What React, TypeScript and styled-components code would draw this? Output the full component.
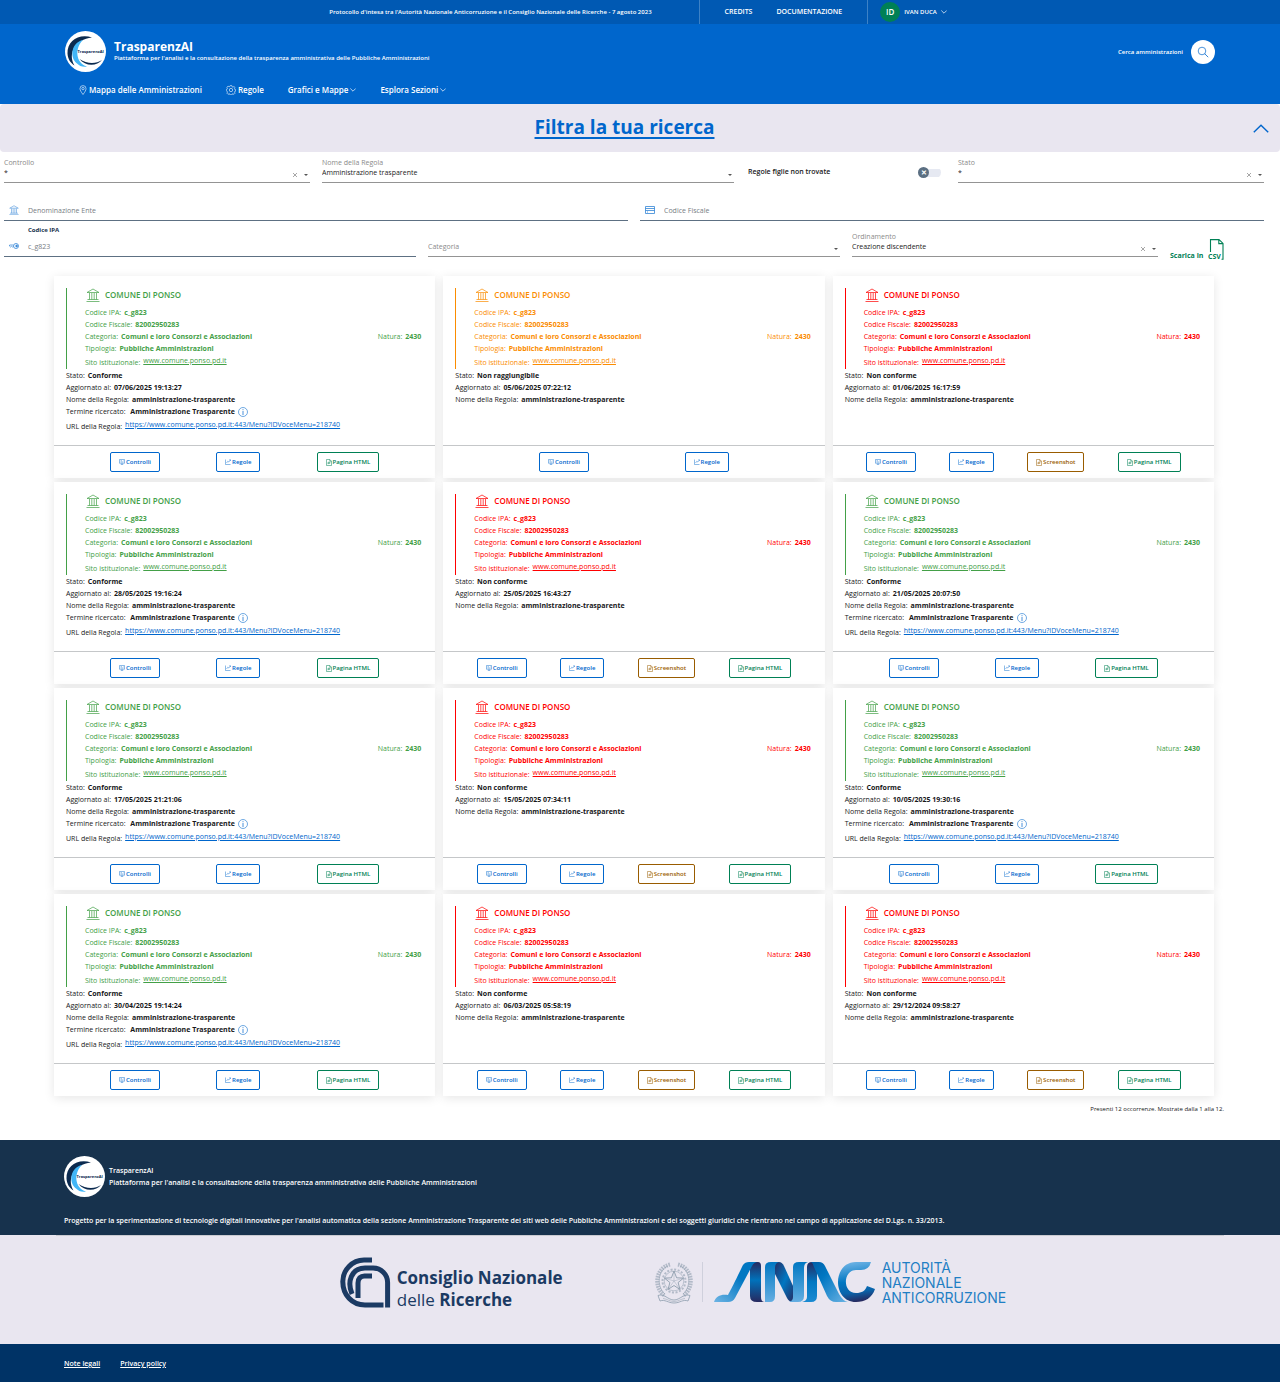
import React from "react";
import styled, { createGlobalStyle } from "styled-components";

const GlobalStyle = createGlobalStyle`
  *, *::before, *::after { box-sizing: border-box; }
  body {
    margin: 0;
    background: #fff;
    color: #17181a;
    font-family: "Open Sans", "Noto Sans", sans-serif;
    font-size: 7px;
    line-height: 12px;
  }
  h1, h2, h3, p, dl, dd, ul { margin: 0; padding: 0; font-size: inherit; font-weight: inherit; }
  a { color: inherit; text-decoration: none; }
  button, input, select { font: inherit; color: inherit; margin: 0; }
  svg { display: block; flex: none; }
`;

/* ---------- palette ---------- */

const tones = {
  ok: "#43a047",
  warn: "#fb8c00",
  ko: "#ff0000",
  primary: "#0066cc",
  success: "#008055",
  brown: "#995c00",
};
type Tone = keyof typeof tones;

/* ---------- icons ---------- */

type IconProps = { size?: number };

const Stroke = styled.svg.attrs({ fill: "none", stroke: "currentColor", "aria-hidden": true })`
  stroke-linecap: butt;
`;

const BankIcon = ({ size = 14 }: IconProps) => (
  <Stroke width={size} height={size} viewBox="0 0 14 14">
    <path d="M1 4.5 L7 1 L13 4.5 M1 4.5H13 M3.5 5V11.5 M5.8 5V11.5 M8.2 5V11.5 M10.5 5V11.5 M1.5 11.5H12.5 M.5 13.5H13.5" strokeWidth="0.7" />
  </Stroke>
);
const CardIcon = () => (
  <Stroke width={10} height={8} viewBox="0 0 10 8">
    <path d="M.5 .5H9.5V7.5H.5Z M.5 2.5H9.5 M.5 4.5H9.5 M2 6H3" strokeWidth="0.8" />
  </Stroke>
);
const KeyIcon = () => (
  <Stroke width={10} height={6} viewBox="0 0 10 6">
    <circle cx="7" cy="3" r="2.5" strokeWidth="0.8" />
    <circle cx="7.6" cy="3" r="1" fill="currentColor" strokeWidth="0.5" />
    <path d="M4.4 2H.6L.4 3L1.5 4L2.4 3.3L3.3 4L4.4 3.6" strokeWidth="0.7" />
  </Stroke>
);
const PinIcon = () => (
  <Stroke width={8} height={10} viewBox="0 0 8 10">
    <path d="M4 9.500C2 6.800 1 5.200 1 3.600A3 3 0 0 1 7 3.600C7 5.200 6 6.800 4 9.500Z" strokeWidth="0.6" />
    <circle cx="4" cy="3.600" r="1.200" strokeWidth="0.6" />
  </Stroke>
);
const GearIcon = () => (
  <Stroke width={10} height={10} viewBox="0 0 24 24">
    <path d="M10 1.500h4l.6 2.800 2 .9 2.500-1.600 2.800 2.800-1.600 2.500.9 2 2.300.6v3l-2.300.6-.9 2 1.600 2.500-2.800 2.800-2.500-1.600-2 .9-.6 2.300h-4l-.6-2.300-2-.9-2.500 1.600-2.800-2.800 1.600-2.500-.9-2L.5 13.500v-3l2.300-.6.9-2-1.600-2.500 2.800-2.800 2.500 1.600 2-.9Z" strokeWidth="1.400" />
    <circle cx="12" cy="12" r="4" strokeWidth="1.400" />
  </Stroke>
);
const ChevronDown = () => (
  <Stroke width={6} height={4} viewBox="0 0 6 4">
    <path d="M.3 .5L3 3.2L5.7 .5" strokeWidth="0.7" />
  </Stroke>
);
const ChevronUp = () => (
  <Stroke width={16} height={9} viewBox="0 0 16 9">
    <path d="M.8 8.2L8 1.2L15.2 8.2" strokeWidth="1.4" />
  </Stroke>
);
const SearchIcon = () => (
  <Stroke width={12} height={12} viewBox="0 0 12 12">
    <circle cx="5" cy="5" r="3.8" strokeWidth="0.7" />
    <path d="M7.700 7.700L11.200 11.200" strokeWidth="0.8" />
  </Stroke>
);
const InfoIcon = () => (
  <Stroke width={10} height={10} viewBox="0 0 10 10">
    <circle cx="5" cy="5" r="4.500" strokeWidth="0.7" />
    <path d="M5 4V8 M5 2.200V3.200" strokeWidth="0.9" />
  </Stroke>
);
const ClearIcon = () => (
  <Stroke width={6} height={6} viewBox="0 0 6 6">
    <path d="M1 1L5 5M5 1L1 5" strokeWidth="0.6" />
  </Stroke>
);
const CaretIcon = () => (
  <svg width={4} height={2} viewBox="0 0 4 2" aria-hidden="true">
    <path d="M0 0H4L2 2Z" fill="#555" />
  </svg>
);
const ControlsIcon = () => (
  <Stroke width={6} height={6} viewBox="0 0 12 12">
    <path d="M1 1H11V8.500H1Z M3.500 11.200H8.500 M6 8.500V11 M3 3.500H6 M3 6H9 M8 3.500H9" strokeWidth=".9" />
  </Stroke>
);
const RulesIcon = () => (
  <Stroke width={6} height={6} viewBox="0 0 12 12">
    <path d="M1 1V11H11 M3 8L5.500 4.500L7.500 6L11 1.800 M8.500 1.500H11.200V4" strokeWidth=".9" />
  </Stroke>
);
const FileIcon = () => (
  <Stroke width={6} height={7} viewBox="0 0 12 14">
    <path d="M1 1H7.500L11 4.500V13H1Z M7.500 1V4.500H11 M4 10.500V6.500H8V8.700H4" strokeWidth="1" />
  </Stroke>
);
const CsvIcon = () => (
  <svg width={16} height={21} viewBox="0 0 16 21" aria-hidden="true">
    <path d="M2.500 13V.6H11L15 4.400V20.300H13.500 M10.800 .6V4.600H15" fill="none" stroke="currentColor" strokeWidth="1.100" />
    <text x="0" y="20.300" fontSize="7" fontWeight="700" fill="currentColor">CSV</text>
  </svg>
);

/* ---------- logos ---------- */

const BrandLogo = () => (
  <svg width={41} height={41} viewBox="0 0 41 41" aria-hidden="true">
    <circle cx="20.500" cy="20.500" r="20.500" fill="#fff" />
    <path d="M27 6.500C14 2 2 10 2.500 22.500C2.800 28 5.500 32 9.500 34.500C2.500 23 10 8 27 6.500Z" fill="#0b2a4f" />
    <path d="M18 9C6.500 11.500 4 26 12 32.500C14.500 35 18 36.500 22 35.500C10.500 32 9.500 17 18 9Z" fill="#41b6f7" />
    <path d="M14.500 28C20 35.500 32 35.500 37 29C31 33 22 33 14.500 28Z" fill="#0b2a4f" />
    <text x="12.500" y="22" fontSize="4" fontWeight="700" fill="#0b2a4f">TrasparenzAI</text>
  </svg>
);

const CnrMark = () => (
  <svg width={51} height={51} viewBox="0 0 51 51" fill="none" stroke="#1b3a63" strokeWidth="5" aria-hidden="true">
    <path d="M32 3H24A21.500 21.500 0 0 0 2.800 24.500C2.800 38 12 48 25 48H43.500" />
    <path d="M12 37C7 25 11 11 25 11H33A14.500 14.500 0 0 1 47.600 25.500V50.500" />
    <path d="M18 41V26C18 21.500 20.500 19 24.500 19H32" />
  </svg>
);

const Emblem = () => (
  <svg width={38} height={42} viewBox="0 0 38 42" fill="none" stroke="#8d9dad" aria-hidden="true">
    <path d="M15 2.500C0 6 -2 26 10 34M23 2.500C38 6 40 26 28 34" strokeWidth="4" strokeDasharray="1.600 .9" opacity=".6" />
    <path d="M13 4C3 8 1 24 10 32M25 4C35 8 37 24 28 32" strokeWidth=".6" />
    <circle cx="19" cy="19" r="11.500" strokeWidth="2" strokeDasharray="2 1.600" opacity=".6" />
    <circle cx="19" cy="19" r="9.800" strokeWidth=".5" />
    <path d="M19 9L21.600 15.800L28.600 16.100L23.100 20.500L25 27.500L19 23.500L13 27.500L14.900 20.500L9.400 16.100L16.400 15.800Z" fill="#e9e6f0" strokeWidth=".9" />
    <path d="M19 9V19L28.600 16.100M19 19L25 27.500M19 19L13 27.500M19 19L9.400 16.100" strokeWidth=".4" />
    <path d="M3 33.500C9 31 13 38 19 38C25 38 29 31 35 33.500L33 39C28 37 25 41 19 41C13 41 10 37 5 39Z" strokeWidth=".8" />
    <path d="M8 36.500C13 37 14 39.500 19 39.500C24 39.500 25 37 30 36.500" strokeWidth=".5" />
  </svg>
);

const AnacMark = () => (
  <svg width={162} height={40} viewBox="0 0 162 40" aria-hidden="true">
    <defs>
      <linearGradient id="sweep" x1="0" y1="1" x2="1" y2="0">
        <stop offset="0" stopColor="#6db4e4" />
        <stop offset=".6" stopColor="#0077c2" />
        <stop offset="1" stopColor="#0077c2" />
      </linearGradient>
      <linearGradient id="fold" x1="0" y1="0" x2="0" y2="1">
        <stop offset="0" stopColor="#27295f" />
        <stop offset=".45" stopColor="#0072bb" />
        <stop offset="1" stopColor="#27295f" />
      </linearGradient>
      <linearGradient id="bright" x1="0" y1="0" x2="0" y2="1">
        <stop offset="0" stopColor="#27295f" />
        <stop offset=".5" stopColor="#0077c2" />
        <stop offset="1" stopColor="#1a8ad2" />
      </linearGradient>
      <linearGradient id="fade" x1="0" y1="0" x2="0" y2="1">
        <stop offset="0" stopColor="#0077c2" />
        <stop offset="1" stopColor="#64aee2" />
      </linearGradient>
      <linearGradient id="deep" x1="0" y1="0" x2="1" y2="1">
        <stop offset="0" stopColor="#27295f" />
        <stop offset=".5" stopColor="#0077c2" />
        <stop offset="1" stopColor="#27295f" />
      </linearGradient>
      <linearGradient id="slope" x1="0" y1="0" x2="1" y2="1">
        <stop offset="0" stopColor="#005fa8" />
        <stop offset=".35" stopColor="#0077c2" />
        <stop offset="1" stopColor="#6db4e4" />
      </linearGradient>
      <linearGradient id="bow" gradientUnits="userSpaceOnUse" x1="148" y1="0" x2="154" y2="38">
        <stop offset="0" stopColor="#64aee2" />
        <stop offset=".45" stopColor="#0077c2" />
        <stop offset=".75" stopColor="#0a63aa" />
        <stop offset="1" stopColor="#27295f" />
      </linearGradient>
    </defs>
    <path d="M36 0H44Q47 0 47 4V35Q47 40 51 40H43Q36 40 36 34Z" fill="url(#fold)" />
    <path d="M0 40C2 34 7 32 14 33C16 30 28 5 29 3Q31 0 35 0H44Q40 0 38 4L21 36Q19 40 14 40Z" fill="url(#sweep)" />
    <path d="M60 0H65Q68 0 70 4L80 26V40H79Q75 40 73 36L60 10Z" fill="url(#deep)" />
    <path d="M51 40V5Q51 0 57 0H65Q61 1 61 6V34Q61 40 56 40Z" fill="url(#fade)" />
    <path d="M79 5Q79 0 85 0H94Q90 1 90 6V34Q90 40 84 40H75Q79 39 79 35Z" fill="url(#fade)" />
    <path d="M93 5Q93 0 98 0H103V34Q103 40 97 40H88Q93 39 93 35Z" fill="url(#bright)" />
    <path d="M97 0H105Q109 0 111 4L125 32Q129 39 134 40H122Q116 40 113 34L100 5Q99 1 97 0Z" fill="url(#slope)" />
    <path d="M157 0Q155 8 147 8H142C129 8 128 31 142 31C148 31 151 29 153 24L161 27C158 36 151 40 142 40C118 40 118 0 142 0Z" fill="url(#bow)" />
  </svg>
);

/* ---------- header ---------- */

const SlimBar = styled.div`
  display: flex;
  justify-content: center;
  height: 24px;
  padding-right: 4px;
  background: #0059b3;
  color: #fff;
  font-weight: 600;
`;
const Notice = styled.p`
  padding-right: 47px;
  font-size: 6px;
  line-height: 24px;
`;
const SlimNav = styled.nav`
  display: flex;
  align-items: center;
  gap: 24px;
  padding: 0 25px;
  border: solid #3d82c6;
  border-width: 0 1px;
  line-height: 24px;
`;
const UserButton = styled.button`
  display: flex;
  align-items: center;
  gap: 4px;
  padding: 0 0 0 12px;
  border: 0;
  background: none;
  font-size: 6px;
`;
const Avatar = styled.span`
  width: 20px;
  border-radius: 50%;
  background: #008055;
  font-size: 8px;
  line-height: 20px;
  text-align: center;
`;
const Header = styled.header`
  background: #0066cc;
  color: #fff;
`;
const Container = styled.div`
  width: 100%;
  max-width: 1176px;
  margin: 0 auto;
  padding: 0 12px;
`;
const BrandRow = styled(Container)`
  display: flex;
  align-items: center;
  justify-content: space-between;
  padding: 7px 13px 0;
`;
const Brand = styled.a`
  display: flex;
  align-items: center;
  gap: 8px;
`;
const BrandName = styled.span`
  display: block;
  padding-top: 1px;
  font-size: 12px;
  font-weight: 700;
  line-height: 12px;
`;
const Tagline = styled.span`
  display: block;
  font-size: 6px;
  font-weight: 600;
  line-height: 10px;
`;
const Search = styled.div`
  display: flex;
  align-items: center;
  gap: 8px;
  font-size: 6px;
  font-weight: 600;
`;
const RoundButton = styled.button`
  display: grid;
  place-items: center;
  width: 24px;
  height: 24px;
  padding: 0;
  border: 0;
  border-radius: 50%;
  background: #fff;
  color: #0066cc;
`;
const MainNav = styled(Container)`
  display: flex;
  align-items: center;
  gap: 24px;
  height: 32px;
  padding: 4px 27px 0;
  font-size: 8px;
  font-weight: 600;
`;
const NavLink = styled.a`
  display: flex;
  align-items: center;
  gap: 2px;
`;

/* ---------- filters ---------- */

const FilterHeading = styled.h2`
  border-radius: 4px;
  background: #e9e6f0;
`;
const FilterToggle = styled.button`
  display: flex;
  align-items: center;
  width: 100%;
  height: 48px;
  padding: 0 11px 0 0;
  border: 0;
  background: none;
  color: #0066cc;
`;
const FilterTitle = styled.span`
  flex: 1;
  padding: 0 4px 2px 0;
  font-size: 19px;
  font-weight: 700;
  line-height: 24px;
  text-align: center;
  text-decoration: underline;
  text-decoration-thickness: 2px;
  text-underline-offset: 3px;
`;
const Filters = styled.form`
  padding: 6px 16px 0 4px;
`;
const FilterRow = styled.div<{ $gap: number }>`
  display: grid;
  grid-template-columns: repeat(12, minmax(0, 1fr));
  column-gap: 12px;
  align-items: end;
  margin-bottom: ${(p) => p.$gap}px;
`;
const Field = styled.div<{ $span: number }>`
  grid-column: span ${(p) => p.$span};
`;
const FieldLabel = styled.label`
  display: block;
  color: #8a8a8a;
  line-height: 10px;
`;
const InsetLabel = styled(FieldLabel)`
  padding-left: 24px;
  color: #17324d;
  font-size: 6px;
  font-weight: 700;
  line-height: 12px;
`;
const SelectBox = styled.div`
  display: flex;
  align-items: center;
  gap: 6px;
  padding-right: 2px;
  border-bottom: 1px solid #949494;
  color: #6b6b6b;
`;
const Select = styled.select<{ $empty?: boolean }>`
  flex: 1;
  min-width: 0;
  height: 14px;
  padding: 0 0 4px;
  border: 0;
  outline: 0;
  background: none;
  appearance: none;
  color: ${(p) => (p.$empty ? "#8a8a8a" : "#222")};
  font-weight: ${(p) => (p.$empty ? 400 : 500)};
  line-height: 10px;
`;
const ClearButton = styled.button`
  padding: 0;
  border: 0;
  background: none;
`;
const InputBox = styled.div`
  display: flex;
  align-items: center;
  gap: 9px;
  height: 21px;
  padding-left: 5px;
  border-bottom: 1px solid #5d7083;
  color: #3385d6;
`;
const Input = styled.input`
  flex: 1;
  min-width: 0;
  height: 20px;
  padding: 0;
  border: 0;
  outline: 0;
  background: none;
  color: #777d84;
  &::placeholder { color: #777d84; opacity: 1; }
`;
const SwitchField = styled.label`
  grid-column: span 2;
  display: flex;
  align-items: center;
  justify-content: space-between;
  align-self: center;
  padding: 3px 5px 0 2px;
  font-weight: 600;
`;
const Switch = styled.input`
  appearance: none;
  display: flex;
  align-items: center;
  width: 23px;
  height: 11px;
  background: linear-gradient(#e6e9f2, #e6e9f2) 5px 2px / 18px 8px no-repeat;
  border-radius: 6px;
  &::before {
    content: "✕";
    width: 11px;
    border-radius: 50%;
    background: #5b6f82;
    color: #fff;
    font-size: 7px;
    line-height: 11px;
    text-align: center;
  }
`;
const CsvButton = styled.button`
  display: flex;
  align-items: flex-end;
  gap: 5px;
  height: 19px;
  margin-bottom: -3px;
  padding: 0;
  border: 0;
  background: none;
  color: #008055;
  font-weight: 700;
  line-height: 8px;
  white-space: nowrap;
`;

function SelectField(props: { id: string; label?: string; value: string; span: number; clearable?: boolean; empty?: boolean }) {
  return (
    <Field $span={props.span}>
      {props.label && <FieldLabel htmlFor={props.id}>{props.label}</FieldLabel>}
      <SelectBox>
        <Select id={props.id} aria-label={props.label ?? props.value} $empty={props.empty}>
          <option>{props.value}</option>
        </Select>
        {props.clearable && (
          <ClearButton type="button" aria-label="Cancella">
            <ClearIcon />
          </ClearButton>
        )}
        <CaretIcon />
      </SelectBox>
    </Field>
  );
}

/* ---------- cards ---------- */

const Results = styled.main`
  width: 100%;
  max-width: 1176px;
  margin: 0 auto;
  padding: 17px 4px 25px 2px;
`;
const CardGrid = styled.div`
  display: grid;
  grid-template-columns: repeat(3, minmax(0, 1fr));
  gap: 4px 8px;
  padding-right: 10px;
`;
const CardBox = styled.article`
  display: flex;
  flex-direction: column;
  background: #fff;
  box-shadow: 0 2px 10px rgba(0, 0, 0, 0.1);
`;
const CardBody = styled.div`
  flex: 1;
  padding: 12px;
`;
const Entity = styled.section<{ $tone: Tone }>`
  padding: 0 2px 0 18px;
  border-left: 1px solid ${(p) => tones[p.$tone]};
  color: ${(p) => tones[p.$tone]};
`;
const EntityTitle = styled.h3`
  display: flex;
  align-items: center;
  gap: 5px;
  height: 18px;
  padding: 0 0 4px 1px;
  font-size: 8px;
  font-weight: 600;
`;
const Line = styled.p<{ $height?: number }>`
  display: flex;
  gap: 3px;
  align-items: ${(p) => (p.$height === 15 ? "flex-end" : "center")};
  height: ${(p) => p.$height ?? 12}px;
  padding-top: 1px;
`;
const Spacer = styled.span`
  flex: 1;
`;
const RaisedLink = styled.a<{ $tone?: Tone }>`
  align-self: flex-start;
  color: ${(p) => (p.$tone ? tones[p.$tone] : "inherit")};
  text-decoration: underline;
  text-underline-offset: 1px;
`;
const InfoButton = styled.button`
  padding: 0;
  border: 0;
  background: none;
  color: #3385d6;
`;
const CardFooter = styled.footer`
  display: flex;
  align-items: center;
  justify-content: space-evenly;
  height: 33px;
  border-top: 1px solid #c5c7c9;
`;
const ActionButton = styled.button<{ $tone: Tone }>`
  display: flex;
  align-items: center;
  gap: 1px;
  height: 20px;
  padding: 0 8px;
  border: 1px solid ${(p) => tones[p.$tone]};
  border-radius: 2px;
  background: none;
  color: ${(p) => tones[p.$tone]};
  font-size: 6px;
  font-weight: 600;
`;
const Summary = styled.p`
  padding-top: 7px;
  font-size: 6px;
  text-align: right;
`;

type Status = "Conforme" | "Non raggiungibile" | "Non conforme";
const statusTone: Record<Status, Tone> = { Conforme: "ok", "Non raggiungibile": "warn", "Non conforme": "ko" };

const results: [Status, string][] = [
  ["Conforme", "07/06/2025 19:13:27"],
  ["Non raggiungibile", "05/06/2025 07:22:12"],
  ["Non conforme", "01/06/2025 16:17:59"],
  ["Conforme", "28/05/2025 19:16:24"],
  ["Non conforme", "25/05/2025 16:43:27"],
  ["Conforme", "21/05/2025 20:07:50"],
  ["Conforme", "17/05/2025 21:21:06"],
  ["Non conforme", "15/05/2025 07:34:11"],
  ["Conforme", "10/05/2025 19:30:16"],
  ["Conforme", "30/04/2025 19:14:24"],
  ["Non conforme", "06/03/2025 05:58:19"],
  ["Non conforme", "29/12/2024 09:58:27"],
];

function ResultCard({ status, date }: { status: Status; date: string }) {
  const found = status === "Conforme";
  return (
    <CardBox>
      <CardBody>
        <Entity $tone={statusTone[status]}>
          <EntityTitle><BankIcon />COMUNE DI PONSO</EntityTitle>
          <Line>Codice IPA: <b>c_g823</b></Line>
          <Line>Codice Fiscale: <b>82002950283</b></Line>
          <Line>Categoria: <b>Comuni e loro Consorzi e Associazioni</b><Spacer />Natura: <b>2430</b></Line>
          <Line>Tipologia: <b>Pubbliche Amministrazioni</b></Line>
          <Line $height={15}>Sito istituzionale: <RaisedLink href="#sito">www.comune.ponso.pd.it</RaisedLink></Line>
        </Entity>
        <Line>Stato: <b>{status}</b></Line>
        <Line>Aggiornato al: <b>{date}</b></Line>
        <Line>Nome della Regola: <b>amministrazione-trasparente</b></Line>
        {found && (
          <>
            <Line $height={13}>
              Termine ricercato:&nbsp; <b>Amministrazione Trasparente</b>
              <InfoButton type="button" aria-label="Informazioni"><InfoIcon /></InfoButton>
            </Line>
            <Line $height={15}>
              URL della Regola:
              <RaisedLink $tone="primary" href="#regola">https://www.comune.ponso.pd.it:443/Menu?IDVoceMenu=218740</RaisedLink>
            </Line>
          </>
        )}
      </CardBody>
      <CardFooter>
        <ActionButton type="button" $tone="primary"><ControlsIcon />Controlli</ActionButton>
        <ActionButton type="button" $tone="primary"><RulesIcon />Regole</ActionButton>
        {status === "Non conforme" && <ActionButton type="button" $tone="brown"><FileIcon />Screenshot</ActionButton>}
        {status !== "Non raggiungibile" && <ActionButton type="button" $tone="success"><FileIcon />Pagina HTML</ActionButton>}
      </CardFooter>
    </CardBox>
  );
}

/* ---------- footer ---------- */

const FooterTop = styled.div`
  padding: 16px 0 8px;
  background: #17324d;
  color: #fff;
  font-weight: 600;
`;
const FooterBrand = styled.div`
  display: flex;
  align-items: center;
  gap: 4px;
  margin-bottom: 18px;
`;
const LogoBand = styled.div`
  background: #e9e6f0;
`;
const LogoRow = styled.div`
  display: flex;
  justify-content: center;
  gap: 92px;
  max-width: 1168px;
  height: 109px;
  margin: 0 auto;
  padding: 21px 0 0 66px;
  border-top: 1px solid #c9cad0;
`;
const CnrLogo = styled.div`
  display: flex;
  gap: 6px;
  align-self: flex-start;
`;
const CnrText = styled.p`
  padding-top: 10px;
  color: #1b3a63;
  font-size: 17px;
  line-height: 22px;
  white-space: nowrap;
`;
const AnacLogo = styled.div`
  display: flex;
  align-items: flex-start;
  padding-top: 5px;
`;
const Divider = styled.span`
  width: 1px;
  height: 40px;
  margin: 0 11px 0 9px;
  background: #cfd0dc;
`;
const AnacText = styled.p`
  margin-top: -2px;
  padding-left: 6px;
  color: #1f7fc4;
  font-family: Inter, sans-serif;
  font-size: 14px;
  line-height: 15px;
  white-space: nowrap;
`;
const LegalBar = styled.div`
  padding: 14px 0 12px;
  background: #003366;
  color: #fff;
  font-weight: 600;
`;
const LegalLinks = styled(Container)`
  display: flex;
  gap: 20px;
  & a { text-decoration: underline; text-underline-offset: 1px; }
`;

export default function App() {
  return (
    <>
      <GlobalStyle />
      <Header>
        <SlimBar>
          <Notice>Protocollo d'intesa tra l'Autorità Nazionale Anticorruzione e il Consiglio Nazionale delle Ricerche - 7 agosto 2023</Notice>
          <SlimNav>
            <a href="#credits">CREDITS</a>
            <a href="#documentazione">DOCUMENTAZIONE</a>
          </SlimNav>
          <UserButton type="button"><Avatar>ID</Avatar>IVAN DUCA<ChevronDown /></UserButton>
        </SlimBar>
        <BrandRow>
          <Brand href="#home">
            <BrandLogo />
            <span>
              <BrandName>TrasparenzAI</BrandName>
              <Tagline>Piattaforma per l'analisi e la consultazione della trasparenza amministrativa delle Pubbliche Amministrazioni</Tagline>
            </span>
          </Brand>
          <Search>
            Cerca amministrazioni
            <RoundButton type="button" aria-label="Cerca"><SearchIcon /></RoundButton>
          </Search>
        </BrandRow>
        <MainNav as="nav">
          <NavLink href="#mappa"><PinIcon />Mappa delle Amministrazioni</NavLink>
          <NavLink href="#regole"><GearIcon />Regole</NavLink>
          <NavLink href="#grafici">Grafici e Mappe<ChevronDown /></NavLink>
          <NavLink href="#sezioni">Esplora Sezioni<ChevronDown /></NavLink>
        </MainNav>
      </Header>

      <FilterHeading>
        <FilterToggle type="button">
          <FilterTitle>Filtra la tua ricerca</FilterTitle>
          <ChevronUp />
        </FilterToggle>
      </FilterHeading>
      <Filters>
        <FilterRow $gap={17}>
          <SelectField id="controllo" label="Controllo" value="*" span={3} clearable />
          <SelectField id="regola" label="Nome della Regola" value="Amministrazione trasparente" span={4} />
          <SwitchField>
            Regole figlie non trovate
            <Switch type="checkbox" />
          </SwitchField>
          <SelectField id="stato" label="Stato" value="*" span={3} clearable />
        </FilterRow>
        <FilterRow $gap={3}>
          <Field $span={6}>
            <InputBox><BankIcon size={10} /><Input aria-label="Denominazione Ente" placeholder="Denominazione Ente" /></InputBox>
          </Field>
          <Field $span={6}>
            <InputBox><CardIcon /><Input aria-label="Codice Fiscale" placeholder="Codice Fiscale" /></InputBox>
          </Field>
        </FilterRow>
        <FilterRow $gap={2}>
          <Field $span={4}>
            <InsetLabel htmlFor="ipa">Codice IPA</InsetLabel>
            <InputBox><KeyIcon /><Input id="ipa" defaultValue="c_g823" /></InputBox>
          </Field>
          <SelectField id="categoria" value="Categoria" span={4} empty />
          <SelectField id="ordinamento" label="Ordinamento" value="Creazione discendente" span={3} clearable />
          <CsvButton type="button">Scarica in<CsvIcon /></CsvButton>
        </FilterRow>
      </Filters>

      <Results>
        <CardGrid>
          {results.map(([status, date]) => (
            <ResultCard key={date} status={status} date={date} />
          ))}
        </CardGrid>
        <Summary>Presenti 12 occorrenze. Mostrate dalla 1 alla 12.</Summary>
      </Results>

      <footer>
        <FooterTop>
          <Container>
            <FooterBrand>
              <BrandLogo />
              <p>
                TrasparenzAI
                <br />
                Piattaforma per l'analisi e la consultazione della trasparenza amministrativa delle Pubbliche Amministrazioni
              </p>
            </FooterBrand>
            <p>
              Progetto per la sperimentazione di tecnologie digitali innovative per l'analisi automatica della sezione Amministrazione Trasparente dei siti web delle Pubbliche Amministrazioni e dei soggetti giuridici che rientrano nel campo di applicazione del D.Lgs. n. 33/2013.
            </p>
          </Container>
        </FooterTop>
        <LogoBand>
          <LogoRow>
            <CnrLogo>
              <CnrMark />
              <CnrText><b>Consiglio Nazionale</b><br />delle <b>Ricerche</b></CnrText>
            </CnrLogo>
            <AnacLogo>
              <Emblem />
              <Divider />
              <AnacMark />
              <AnacText>AUTORITÀ<br />NAZIONALE<br />ANTICORRUZIONE</AnacText>
            </AnacLogo>
          </LogoRow>
        </LogoBand>
        <LegalBar>
          <LegalLinks>
            <a href="#note">Note legali</a>
            <a href="#privacy">Privacy policy</a>
          </LegalLinks>
        </LegalBar>
      </footer>
    </>
  );
}
